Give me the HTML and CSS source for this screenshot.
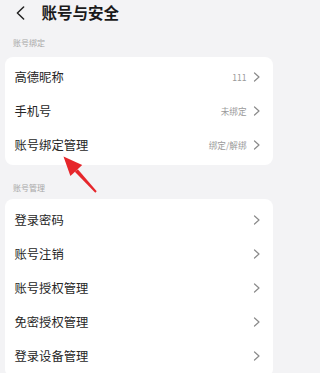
FILE: index.html
```html
<!DOCTYPE html>
<html lang="zh-CN">
<head>
<meta charset="utf-8">
<link rel="stylesheet" href="styles.css">
</head>
<body>
<div class="page">
  <header class="topbar">
    <svg class="back" width="9" height="14" viewBox="0 0 9 14"><path d="M7.6 1 L1.4 7 L7.6 13" fill="none" stroke="#222" stroke-width="1.5" stroke-linecap="round" stroke-linejoin="round"/></svg>
    <h1 class="title">账号与安全</h1>
  </header>

  <div class="section-label first">账号绑定</div>
  <div class="card card-bind">
    <div class="row"><span class="name">高德昵称</span><span class="value">111</span><svg class="chev" width="8" height="10" viewBox="0 0 8 10"><path d="M1.5 1 L6 5 L1.5 9" fill="none" stroke="#8a8a8a" stroke-width="1.2" stroke-linecap="round" stroke-linejoin="round"/></svg></div>
    <div class="row"><span class="name">手机号</span><span class="value">未绑定</span><svg class="chev" width="8" height="10" viewBox="0 0 8 10"><path d="M1.5 1 L6 5 L1.5 9" fill="none" stroke="#8a8a8a" stroke-width="1.2" stroke-linecap="round" stroke-linejoin="round"/></svg></div>
    <div class="row"><span class="name">账号绑定管理</span><span class="value">绑定/解绑</span><svg class="chev" width="8" height="10" viewBox="0 0 8 10"><path d="M1.5 1 L6 5 L1.5 9" fill="none" stroke="#8a8a8a" stroke-width="1.2" stroke-linecap="round" stroke-linejoin="round"/></svg></div>
  </div>

  <div class="section-label second">账号管理</div>
  <div class="card card-manage">
    <div class="row"><span class="name">登录密码</span><svg class="chev" width="8" height="10" viewBox="0 0 8 10"><path d="M1.5 1 L6 5 L1.5 9" fill="none" stroke="#8a8a8a" stroke-width="1.2" stroke-linecap="round" stroke-linejoin="round"/></svg></div>
    <div class="row"><span class="name">账号注销</span><svg class="chev" width="8" height="10" viewBox="0 0 8 10"><path d="M1.5 1 L6 5 L1.5 9" fill="none" stroke="#8a8a8a" stroke-width="1.2" stroke-linecap="round" stroke-linejoin="round"/></svg></div>
    <div class="row"><span class="name">账号授权管理</span><svg class="chev" width="8" height="10" viewBox="0 0 8 10"><path d="M1.5 1 L6 5 L1.5 9" fill="none" stroke="#8a8a8a" stroke-width="1.2" stroke-linecap="round" stroke-linejoin="round"/></svg></div>
    <div class="row"><span class="name">免密授权管理</span><svg class="chev" width="8" height="10" viewBox="0 0 8 10"><path d="M1.5 1 L6 5 L1.5 9" fill="none" stroke="#8a8a8a" stroke-width="1.2" stroke-linecap="round" stroke-linejoin="round"/></svg></div>
    <div class="row"><span class="name">登录设备管理</span><svg class="chev" width="8" height="10" viewBox="0 0 8 10"><path d="M1.5 1 L6 5 L1.5 9" fill="none" stroke="#8a8a8a" stroke-width="1.2" stroke-linecap="round" stroke-linejoin="round"/></svg></div>
  </div>

  <svg class="arrow" width="282" height="373" viewBox="0 0 282 373">
    <polygon points="63.5,156.5 70.4,175.9 82.2,165.1" fill="#e6262b"/>
    <polygon points="74.8,171.8 77.8,169.2 96.7,191.3 95.3,192.7" fill="#e6262b"/>
  </svg>
</div>
</body>
</html>
```

FILE: styles.css
```css
* { box-sizing: border-box; }
html, body { margin: 0; padding: 0; }
body {
  background: #f3f3f5;
  font-family: "Noto Sans CJK SC", "Noto Sans", sans-serif;
  color: #222;
}
.page { position: relative; height: 373px; overflow: hidden; }
.topbar {
  height: 25px;
  display: flex;
  align-items: center;
  padding-left: 15.5px;
}
.back { display: block; }
.title {
  margin: 0 0 0 17px;
  font-size: 15.5px;
  font-weight: 700;
  line-height: 25px;
  color: #1a1a1a;
}
.section-label {
  font-size: 8px;
  line-height: 12px;
  color: #a8a8a8;
  padding-left: 13px;
}
.section-label.first { margin-top: 12px; }
.section-label.second { margin-top: 17px; }
.card {
  background: #fff;
  border-radius: 8px;
  margin-left: 4.5px;
  width: 268px;
}
.card-bind { margin-top: 8px; padding: 3px 0; }
.card-manage { margin-top: 5px; padding: 4px 0; }
.row {
  height: 34px;
  display: flex;
  align-items: center;
  padding: 0 12px 0 10px;
}
.name {
  flex: 1;
  font-size: 12.3px;
  color: #262626;
}
.value {
  font-size: 8.6px;
  color: #9a9a9a;
  margin-right: 6px;
}
.chev { display: block; }
.arrow {
  position: absolute;
  left: 0;
  top: 0;
  pointer-events: none;
}
```
